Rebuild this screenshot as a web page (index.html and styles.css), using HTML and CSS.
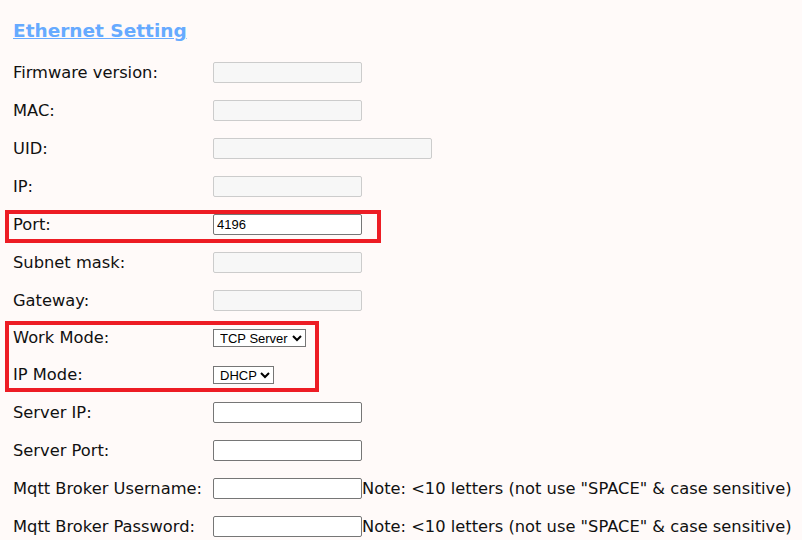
FILE: index.html
```html
<!DOCTYPE html>
<html>
<head>
<meta charset="utf-8">
<link rel="stylesheet" href="styles.css">
</head>
<body>
<div class="page">
  <h2 class="title"><a href="#">Ethernet Setting</a></h2>
  <div class="form">
    <div class="row"><span class="label">Firmware version:</span><input class="field" disabled></div>
    <div class="row"><span class="label">MAC:</span><input class="field" disabled></div>
    <div class="row"><span class="label">UID:</span><input class="field wide" disabled></div>
    <div class="row"><span class="label">IP:</span><input class="field" disabled></div>
    <div class="row"><span class="label">Port:</span><input class="field" value="4196"></div>
    <div class="row"><span class="label">Subnet mask:</span><input class="field" disabled></div>
    <div class="row"><span class="label">Gateway:</span><input class="field" disabled></div>
    <div class="row short"><span class="label">Work Mode:</span><select class="sel sel-work"><option>TCP Server</option></select></div>
    <div class="row short"><span class="label">IP Mode:</span><select class="sel sel-ip"><option>DHCP</option></select></div>
    <div class="row"><span class="label">Server IP:</span><input class="field"></div>
    <div class="row"><span class="label">Server Port:</span><input class="field"></div>
    <div class="row"><span class="label">Mqtt Broker Username:</span><input class="field"><span class="note">Note: &lt;10 letters (not use "SPACE" &amp; case sensitive)</span></div>
    <div class="row"><span class="label">Mqtt Broker Password:</span><input class="field" type="password"><span class="note">Note: &lt;10 letters (not use "SPACE" &amp; case sensitive)</span></div>
  </div>
  <div class="mark mark-port"></div>
  <div class="mark mark-mode"></div>
</div>
</body>
</html>
```
FILE: styles.css
```css
html, body {
  margin: 0;
  padding: 0;
  background: #fffaf9;
}
.page {
  position: relative;
  padding: 0 0 0 13px;
  font-family: "DejaVu Sans", Verdana, sans-serif;
  font-size: 16.3px;
  color: #111;
}
.title {
  margin: 0;
  padding-top: 19px;
  height: 34px;
  font-size: 18.5px;
  font-weight: bold;
  line-height: 24px;
}
.title a {
  color: #66aaff;
  text-decoration: underline;
}
.form {
  display: flex;
  flex-direction: column;
}
.row {
  display: flex;
  align-items: center;
  height: 38px;
}
.row.short {
  height: 37px;
}
.label {
  width: 200px;
  flex: none;
}
.field {
  box-sizing: border-box;
  width: 149px;
  height: 21px;
  margin: 0;
  padding: 1px 3px;
  border: 1px solid #767676;
  border-radius: 2px;
  background: #fff;
  font-family: "Liberation Sans", Arial, sans-serif;
  font-size: 13px;
  color: #000;
  flex: none;
}
.field:disabled {
  background: #f7f7f7;
  border-color: #cccccc;
}
.field.wide {
  width: 219px;
}
.sel {
  box-sizing: border-box;
  height: 18px;
  margin: 0;
  padding: 0 0 0 2px;
  border: 1px solid #767676;
  border-radius: 0;
  background: #fff;
  font-family: "Liberation Sans", Arial, sans-serif;
  font-size: 13px;
  color: #000;
}
.sel-work { width: 93px; }
.sel-ip { width: 61px; }
.note {
  white-space: nowrap;
}
.mark {
  position: absolute;
  box-sizing: border-box;
  border: 4px solid #ed1c24;
}
.mark-port {
  left: 5px;
  top: 210px;
  width: 376px;
  height: 33px;
}
.mark-mode {
  left: 5px;
  top: 321px;
  width: 314px;
  height: 71px;
}
```
